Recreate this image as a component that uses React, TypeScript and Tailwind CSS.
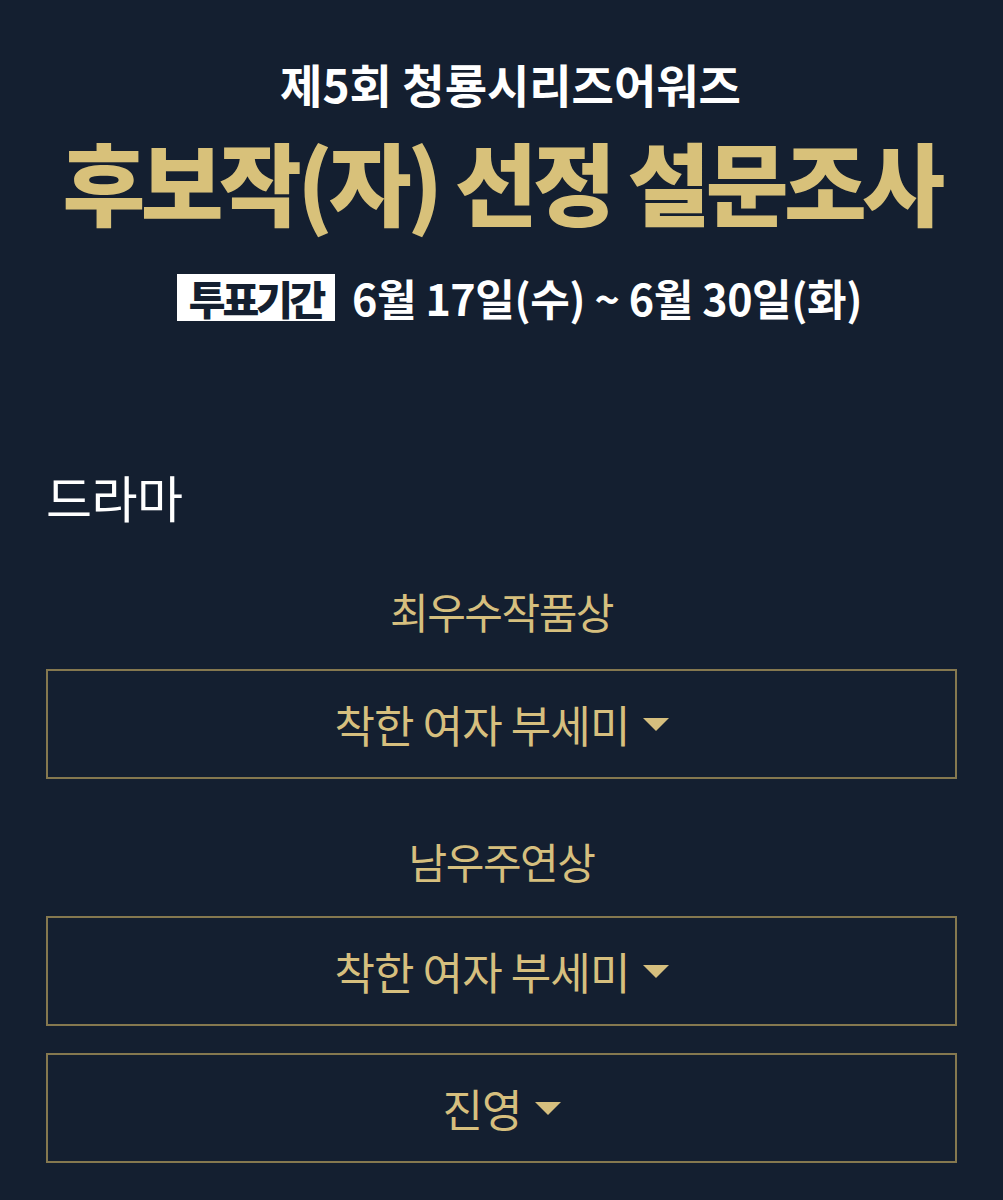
const FONT = "font-['Noto_Sans_CJK_KR','Noto_Sans',sans-serif]";

function Caret() {
  return (
    <svg width="26" height="13" viewBox="0 0 26 13" className="shrink-0">
      <path d="M0 0 H26 L13 13 Z" fill="#d6bf7e" />
    </svg>
  );
}

function Picker({ value }: { value: string }) {
  return (
    <div className="flex h-[110px] w-full items-center justify-center gap-[13px] border-2 border-[#85784f]">
      <span className="text-[44px] leading-none text-[#d6bf7e] tracking-[-0.02em]">{value}</span>
      <Caret />
    </div>
  );
}

function Label({ children, className = "" }: { children: string; className?: string }) {
  return (
    <p className={`text-center text-[42px] leading-[44px] text-[#d6bf7e] tracking-[-0.035em] ${className}`}>
      {children}
    </p>
  );
}

export default function App() {
  return (
    <div className={`min-h-[1200px] w-full bg-[#141f30] ${FONT}`}>
      <header className="flex flex-col items-center pt-[58px]">
        <h1 className="ml-[18px] text-[46px] font-bold leading-[50px] text-white">
          제5회 청룡시리즈어워즈
        </h1>
        <h2 className="mt-[24px] text-[90px] font-black leading-[96px] tracking-[-0.05em] text-[#d8c17a]">
          후보작(자) 선정 설문조사
        </h2>
        <div className="ml-[36px] mt-[46px] flex h-[47px] items-center gap-[17px]">
          <span className="flex h-[47px] w-[158px] items-center justify-center bg-white text-[40px] font-black tracking-[-0.08em] text-[#141f30]">
            투표기간
          </span>
          <span className="text-[43px] font-bold tracking-[-0.01em] text-white">
            6월 17일(수) ~ 6월 30일(화)
          </span>
        </div>
      </header>

      <section className="flex flex-col px-[46px] pb-10">
        <h3 className="mt-[150px] text-[50px] leading-[50px] tracking-[-0.01em] text-white">드라마</h3>

        <Label className="mt-[68px]">최우수작품상</Label>
        <div className="mt-[36px]">
          <Picker value="착한 여자 부세미" />
        </div>

        <Label className="mt-[60px]">남우주연상</Label>
        <div className="mt-[33px]">
          <Picker value="착한 여자 부세미" />
        </div>
        <div className="mt-[27px]">
          <Picker value="진영" />
        </div>
      </section>
    </div>
  );
}
